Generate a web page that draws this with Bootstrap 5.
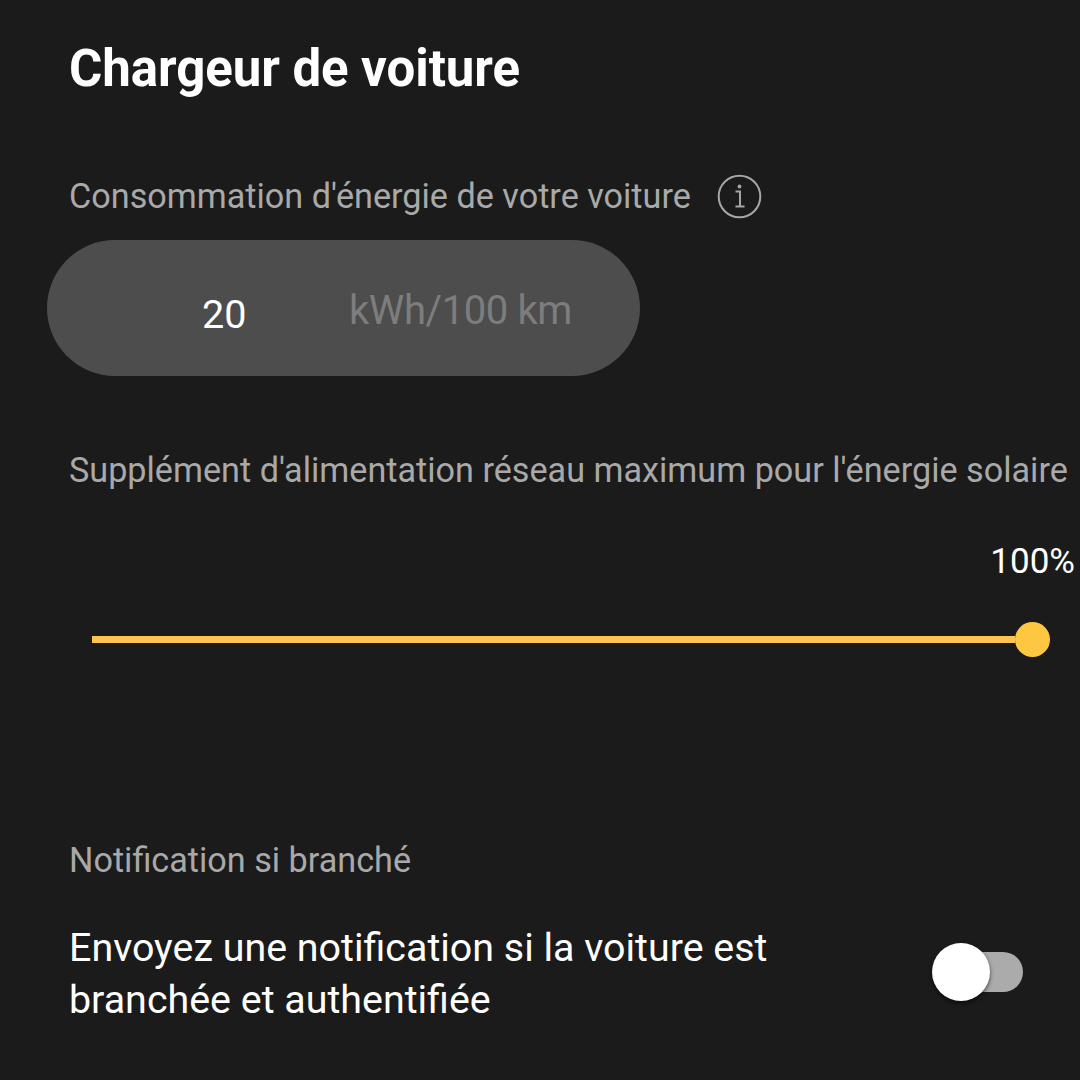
<!DOCTYPE html>
<html lang="fr" data-bs-theme="dark">
<head>
<meta charset="utf-8">
<meta name="viewport" content="width=device-width, initial-scale=1">
<title>Chargeur de voiture</title>
<link rel="stylesheet" href="https://cdn.jsdelivr.net/npm/bootstrap@5.3.0/dist/css/bootstrap.min.css">
<style>
body{background:#1b1b1b;color:#fff;font-family:Roboto,sans-serif;overflow:hidden}
.screen{width:1080px;height:1080px;padding:39px 0 0 69px}
.screen-title{font-size:51px;line-height:60px;font-weight:700;letter-spacing:-.07px;white-space:nowrap}
.caption-text{font-size:34.2px;line-height:40px;color:#a9a9a9;white-space:nowrap}
.usage-head{margin-top:73px;gap:26px;height:48px}
.usage-field{margin:20px 0 0 -22px;width:593px;height:136px;background:#4d4d4d;padding:6px 0 0 155px}
.usage-value{font-size:39.6px;line-height:48px;width:147px;padding-top:8px}
.usage-unit{font-size:40px;line-height:48px;letter-spacing:-.4px;color:#7d7d7d;white-space:nowrap}
.grid-head{margin-top:74px}
.percent{font-size:35px;line-height:42px;margin-top:51px;padding-right:5px}
.slider{margin:38px 30px 0 23px;height:36px}
.slider-line{height:7px;background:#fbc453}
.slider-knob{width:35px;height:35px;background:#fdc741}
.notice-head{margin-top:183px}
.notice-row{margin-top:41px;padding-right:57px}
.notice-text{font-size:39.4px;line-height:52px;white-space:nowrap;padding-top:1px}
.switch-box{width:91px;height:60px;margin-top:21px}
.switch-track{width:76px;height:40px;background:#ababab}
.switch-knob{width:58px;height:58px;background:#fff;margin-right:-43px;z-index:1;box-shadow:0 2px 4px #0009}
</style>
<script src="https://cdn.jsdelivr.net/npm/bootstrap@5.3.0/dist/js/bootstrap.bundle.min.js"></script>
</head>
<body>
<main class="screen d-flex flex-column">
<h1 class="screen-title mb-0">Chargeur de voiture</h1>
<section>
<div class="usage-head d-flex align-items-center">
<span class="caption-text">Consommation d'énergie de votre voiture</span>
<svg width="45" height="45" viewBox="0 0 45 45" fill="none" stroke="#a6a6a6" stroke-width="2"><circle cx="22.5" cy="22.5" r="20.8"/><path d="M18.500 17.500h4.500v14.500M18.500 32.500h9"/><circle cx="22.500" cy="12.500" r="1.900" fill="#a6a6a6" stroke="none"/></svg>
</div>
<div class="usage-field rounded-pill d-flex align-items-center">
<span class="usage-value">20</span><span class="usage-unit">kWh/100 km</span>
</div>
</section>
<section>
<div class="grid-head caption-text">Supplément d'alimentation réseau maximum pour l'énergie solaire</div>
<div class="percent text-end">100%</div>
<div class="slider d-flex align-items-center"><div class="slider-line flex-grow-1"></div><div class="slider-knob rounded-circle"></div></div>
</section>
<section>
<div class="notice-head caption-text">Notification si branché</div>
<div class="notice-row d-flex justify-content-between">
<div class="notice-text">Envoyez une notification si la voiture est<br>branchée et authentifiée</div>
<div class="switch-box d-flex align-items-center" role="switch" aria-checked="false"><div class="switch-knob rounded-circle flex-shrink-0"></div><div class="switch-track rounded-pill flex-shrink-0"></div></div>
</div>
</section>
</main>
</body>
</html>
